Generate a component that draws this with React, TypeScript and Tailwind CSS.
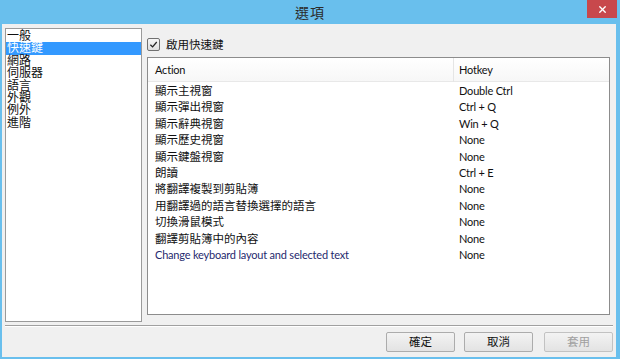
import { X } from 'lucide-react';

const categories = ['一般', '快速鍵', '網路', '伺服器', '語言', '外觀', '例外', '進階'];

const hotkeys: [string, string][] = [
  ['顯示主視窗', 'Double Ctrl'],
  ['顯示彈出視窗', 'Ctrl + Q'],
  ['顯示辭典視窗', 'Win + Q'],
  ['顯示歷史視窗', 'None'],
  ['顯示鍵盤視窗', 'None'],
  ['朗讀', 'Ctrl + E'],
  ['將翻譯複製到剪貼簿', 'None'],
  ['用翻譯過的語言替換選擇的語言', 'None'],
  ['切換滑鼠模式', 'None'],
  ['翻譯剪貼簿中的內容', 'None'],
  ['Change keyboard layout and selected text', 'None'],
];

const font = { fontFamily: 'Lato, "Noto Sans CJK TC", sans-serif' };

// 英文字用稍窄的字距
const latin = 'text-[11px] tracking-[-0.2px]';

function DialogButton({ label, disabled }: { label: string; disabled?: boolean }) {
  return (
    <button
      disabled={disabled}
      className={
        'h-[20px] w-[69px] rounded-[2px] border bg-gradient-to-b from-[#f3f3f3] to-[#e3e3e3] text-[11.5px] leading-none ' +
        (disabled ? 'border-[#c2c2c2] text-[#a0a0a0]' : 'border-[#acacac] text-[#111]')
      }
    >
      {label}
    </button>
  );
}

export default function App() {
  return (
    <div className="flex h-[359px] w-[620px] flex-col bg-[#69bfed] text-[11.5px] text-[#111]" style={font}>
      {/* 標題列 */}
      <div className="relative flex h-[24px] shrink-0 items-center justify-center">
        <span className="text-[14px] tracking-[1px] text-[#2b2b2b]">選項</span>
        <div className="absolute right-[3px] top-0 flex h-[18px] w-[30px] items-center justify-center bg-[#c8484c]">
          <X className="h-[11px] w-[11px] text-white" strokeWidth={3} />
        </div>
      </div>

      {/* 內容 */}
      <div className="mb-[2px] ml-[2px] mr-[4px] flex flex-1 flex-col bg-[#f0f0f0]">
        <div className="flex pl-[3px] pt-[4px]">
          <div className="h-[294px] w-[137px] border border-[#9a9a9a] bg-white pt-[1px]">
            {categories.map((c) => (
              <div
                key={c}
                className={
                  'h-[12.4px] pl-[1px] text-[12px] leading-[12.4px] ' +
                  (c === '快速鍵' ? 'bg-[#3399ff] text-white' : '')
                }
              >
                {c}
              </div>
            ))}
          </div>

          <div className="ml-[5px] flex flex-col">
            <label className="mt-[10px] flex h-[13px] items-center gap-[6px]">
              <span className="flex h-[13px] w-[13px] items-center justify-center rounded-[2px] border border-[#707070] bg-gradient-to-b from-[#f6f6f6] to-[#dedede]">
                <svg viewBox="0 0 10 10" className="h-[9px] w-[9px]">
                  <path d="M1.5 5.2 L4 7.6 L8.6 2.2" fill="none" stroke="#222" strokeWidth="1.4" />
                </svg>
              </span>
              <span>啟用快速鍵</span>
            </label>

            <div className="mt-[6px] h-[258px] w-[463px] border border-[#8c8c8c] bg-white">
              <div className={'flex h-[24px] items-center border-b border-[#e8e8e8] bg-gradient-to-b from-white to-[#f7f7f7] ' + latin}>
                <div className="w-[306px] border-r border-[#e5e5e5] pl-[7px] leading-[24px]">Action</div>
                <div className="flex-1 pl-[5px] leading-[24px]">Hotkey</div>
              </div>
              <div className="pt-[1px]">
                {hotkeys.map(([action, key]) => {
                  const isLatin = action.startsWith('Change');
                  return (
                    <div key={action} className="flex h-[16.4px] items-center leading-[16.4px]">
                      <div className={'w-[306px] pl-[7px] ' + (isLatin ? 'text-[#1f2a6e] ' + latin : '')}>{action}</div>
                      <div className={'flex-1 pl-[5px] ' + latin}>{key}</div>
                    </div>
                  );
                })}
              </div>
            </div>
          </div>
        </div>

        {/* 分隔線 */}
        <div className="mx-[3px] mt-[3px] h-[2px] border-b border-t border-b-white border-t-[#a0a0a0]" />

        {/* 按鈕 */}
        <div className="mr-[3px] mt-[5px] flex justify-end gap-[9px]">
          <DialogButton label="確定" />
          <DialogButton label="取消" />
          <div className="ml-[2px]">
            <DialogButton label="套用" disabled />
          </div>
        </div>
      </div>
    </div>
  );
}
